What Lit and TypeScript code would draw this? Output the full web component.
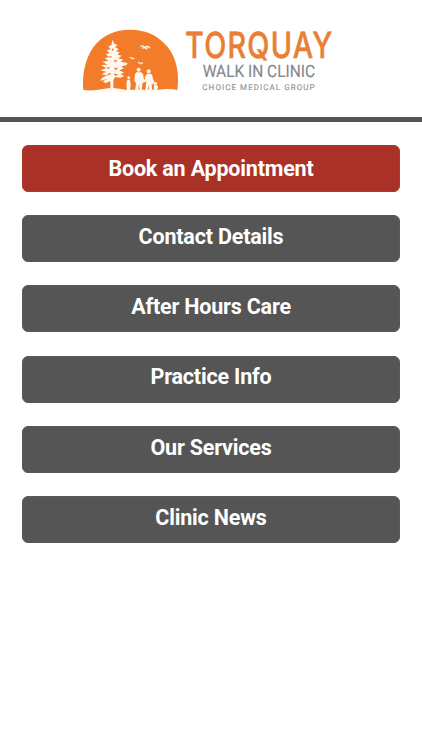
import { LitElement, html, css } from "lit";
import { customElement } from "lit/decorators.js";

@customElement("clinic-logo")
class ClinicLogo extends LitElement {
  static styles = css`
    :host { display: block; width: 264px; height: 76px; }
    svg { display: block; width: 264px; height: 76px; overflow: visible; font-family: Roboto, sans-serif; text-rendering: geometricPrecision; }
    .sun { fill: #f27c2a; }
    .cut { fill: #fff8f2; }
    .line { fill: none; stroke: #fff8f2; stroke-linecap: round; stroke-linejoin: round; }
    .name { fill: #e87f35; font-family: Inter, sans-serif; font-weight: 500; font-size: 108px; stroke: #e87f35; stroke-width: 1.5; }
    .sub { fill: #85888f; font-size: 51px; stroke: #85888f; stroke-width: 0.5; }
    .group { fill: #95989d; font-size: 24px; stroke: #95989d; stroke-width: 0.6; }
  `;
  render() {
    return html`
      <svg viewBox="0 0 792 228" role="img" aria-label="Torquay Walk In Clinic">
        <path class="sun" d="M22 204C18 159 27 110 53 74C79 39 118 23 163 23C211 23 249 42 276 76C302 110 311 157 304 204Q281 198 245 203H137Q102 195 79 202Q50 207 22 204Z" />
        <path class="cut" d="M110 53L115 65L125 69L117 75L128 82L120 88L131 91L125 98L137 101L127 109L142 113L134 119L155 123L151 130L136 133L143 139L130 145L144 152L133 157L145 162L133 167L117 165L112 175V209H103V178L88 183L80 178L95 171L72 176L79 167L93 160L77 157L91 149L73 145L91 139L75 129L95 128L79 119L97 117L86 108L100 106L89 96L101 94L92 85L104 82L97 73L106 70Z" />
        <path class="sun" d="M108 78L114 84L107 87ZM99 101L109 104L103 108ZM115 114L126 116L115 121ZM91 134L103 137L96 141ZM115 137L128 138L117 145ZM99 153L106 155L91 163ZM115 154L128 158L116 162Z" />
        <path class="cut" d="M74 205Q107 192 151 205L149 210H71Z" />
        <g class="cut">
          <circle cx="158" cy="167" r="4" />
          <path d="M154 173H162L164 188L162 205H153L151 186Z" />
          <circle cx="188" cy="143" r="6" />
          <path d="M181 151H196L202 158L204 180L199 185L197 207L200 211H191L189 184L186 211H177L180 183L175 177L177 157Z" />
          <circle cx="218" cy="148" r="6" />
          <path d="M213 155H225L230 163L232 188L227 185L229 208H219L218 188L214 208H208L211 180L206 176L207 165Z" />
          <circle cx="239" cy="184" r="4" />
          <path d="M234 190L244 189L246 197L241 208H234Z" />
        </g>
        <path class="line" stroke-width="4" d="M201 171L206 179L211 166M230 173L237 189" />
        <path class="line" stroke-width="4" d="M195 73Q201 69 207 77Q214 70 221 77M200 78L207 77L213 81" />
        <path class="line" stroke-width="3.2" d="M162 106Q165 106 168 110Q171 107 174 110M187 122Q191 121 194 126Q197 121 200 123" />
        <text class="name" transform="translate(327 107) scale(0.8 1)" textLength="552" lengthAdjust="spacing">TORQUAY</text>
        <text class="sub" x="380" y="164.5" textLength="337" lengthAdjust="spacingAndGlyphs">WALK IN CLINIC</text>
        <text class="group" x="379" y="204" textLength="337">CHOICE MEDICAL GROUP</text>
      </svg>
    `;
  }
}

@customElement("app-root")
class AppRoot extends LitElement {
  static styles = css`
    :host { display: block; min-height: 750px; background: #fff; font-family: Roboto, sans-serif; }
    header { box-sizing: border-box; height: 122px; padding: 22px 0 0 76px; border-bottom: 5px solid #555; }
    nav { display: grid; gap: 23.2px; padding: 23.1px 22.4px 0; }
    button {
      box-sizing: border-box; display: block; width: 100%; height: 47px; margin: 0;
      padding: 0 0 3.6px; border: 1px solid #595959; border-radius: 6px;
      background: #555; color: #fff; font: 700 21.5px/26px Roboto, sans-serif; letter-spacing: -0.19px;
    }
    .primary { background: #aa3127; border-color: #b0382c; padding: 0; }
  `;
  private items = ["Book an Appointment", "Contact Details", "After Hours Care", "Practice Info", "Our Services", "Clinic News"];
  render() {
    return html`
      <header><clinic-logo></clinic-logo></header>
      <nav>
        ${this.items.map((label, i) => html`<button class=${i === 0 ? "primary" : "secondary"}>${label}</button>`)}
      </nav>
    `;
  }
}
